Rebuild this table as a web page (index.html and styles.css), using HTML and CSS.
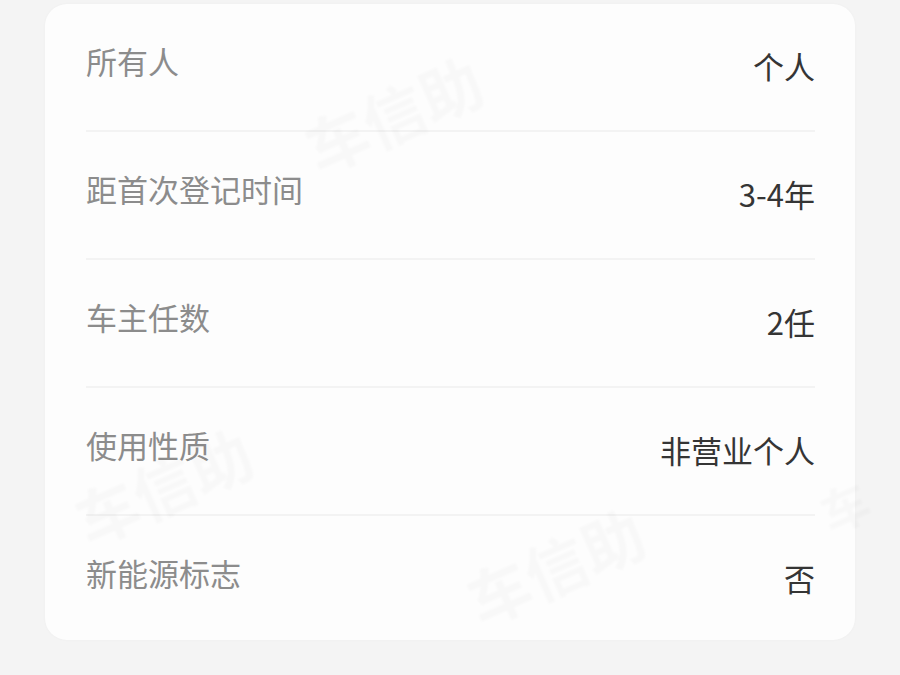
FILE: index.html
```html
<!DOCTYPE html>
<html lang="zh-CN">
<head>
<meta charset="utf-8">
<title>车辆信息</title>
<link rel="stylesheet" href="styles.css">
</head>
<body>
<div class="page">
  <div class="card">
    <div class="row">
      <span class="label">所有人</span>
      <span class="value">个人</span>
    </div>
    <div class="row">
      <span class="label">距首次登记时间</span>
      <span class="value">3-4年</span>
    </div>
    <div class="row">
      <span class="label">车主任数</span>
      <span class="value">2任</span>
    </div>
    <div class="row">
      <span class="label">使用性质</span>
      <span class="value">非营业个人</span>
    </div>
    <div class="row last">
      <span class="label">新能源标志</span>
      <span class="value">否</span>
    </div>
  </div>
  <span class="wm wm-1">车信助</span>
  <span class="wm wm-2">车信助</span>
  <span class="wm wm-3">车信助</span>
  <span class="wm wm-4">车</span>
</div>
</body>
</html>
```
FILE: styles.css
```css
html, body {
  margin: 0;
  padding: 0;
}
body {
  background: #f4f4f4;
  font-family: "Noto Sans CJK SC", "Noto Sans", sans-serif;
  width: 900px;
  height: 675px;
  overflow: hidden;
}
.page {
  position: relative;
  padding-top: 4px;
  height: 671px;
  overflow: hidden;
}
.card {
  margin: 0 45px;
  width: 810px;
  box-sizing: border-box;
  padding: 0 40px 0 41px;
  background: #fdfdfd;
  border-radius: 22px;
  box-shadow: 0 0 3px rgba(0, 0, 0, 0.03);
}
.row {
  height: 126px;
  display: flex;
  justify-content: space-between;
  align-items: flex-start;
  border-bottom: 2px solid #f3f3f3;
}
.row.last {
  height: 124px;
  border-bottom: none;
}
.label {
  margin-top: 41px;
  font-size: 31px;
  line-height: 31px;
  color: #8c8c8c;
}
.value {
  margin-top: 46px;
  font-size: 31px;
  line-height: 31px;
  color: #353535;
}
.wm {
  position: absolute;
  font-size: 62px;
  font-weight: 700;
  color: rgba(0, 0, 0, 0.02);
  transform: rotate(-24deg);
  filter: blur(1px);
  white-space: nowrap;
  pointer-events: none;
}
.wm-1 { left: 300px; top: 68px; }
.wm-2 { left: 70px; top: 440px; }
.wm-3 { left: 462px; top: 520px; }
.wm-4 { left: 820px; top: 470px; font-size: 48px; }
```
